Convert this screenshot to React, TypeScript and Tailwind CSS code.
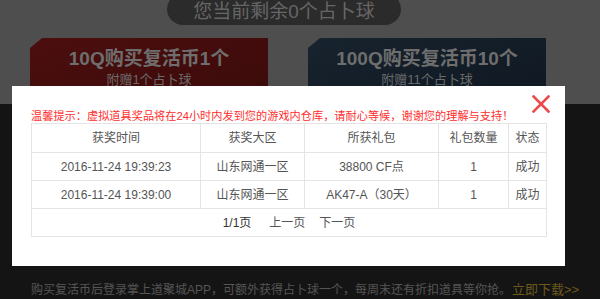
import React from "react";

const rows = [
  ["2016-11-24 19:39:23", "山东网通一区", "38800 CF点", "1", "成功"],
  ["2016-11-24 19:39:00", "山东网通一区", "AK47-A（30天）", "1", "成功"],
];

export default function App() {
  const font = { fontFamily: '"Liberation Sans", "Noto Sans CJK SC", sans-serif' };
  return (
    <div
      className="relative w-[600px] h-[299px] overflow-hidden bg-[#141414] font-['Liberation_Sans','Noto_Sans_CJK_SC',sans-serif]"
      style={font}
    >
      {/* top area */}
      <div className="h-[104px] overflow-hidden bg-[#4e4e4e]">
        <div className="ml-[167px] -mt-[7px] flex h-[32px] w-[234px] items-center justify-center rounded-full bg-[#2b2b2b] pt-[6px] text-[19px] text-[#666]">
          您当前剩余0个占卜球
        </div>
        <div className="mt-[13px] flex gap-[40px] pl-[30px]">
          <div className="h-[80px] w-[238px] bg-gradient-to-br from-[#4c0e0e] to-[#3a0a0a] pt-[8px] text-center [clip-path:polygon(12px_0,100%_0,100%_100%,0_100%,0_10px)]">
            <div className="text-[19px] font-bold leading-[26px] text-[#6e6e6e]">10Q购买复活币1个</div>
            <div className="text-[13px] leading-[16px] text-[#6a6a6a]">附赠1个占卜球</div>
          </div>
          <div className="h-[80px] w-[238px] bg-gradient-to-br from-[#17232e] to-[#0f1720] pt-[8px] text-center [clip-path:polygon(12px_0,100%_0,100%_100%,0_100%,0_10px)]">
            <div className="text-[19px] font-bold leading-[26px] text-[#6e6e6e]">100Q购买复活币10个</div>
            <div className="text-[13px] leading-[16px] text-[#6a6a6a]">附赠11个占卜球</div>
          </div>
        </div>
      </div>

      {/* bottom text */}
      <div className="pl-[31px] pt-[178px] text-[12px] leading-[16px] text-[#565656] whitespace-nowrap">
        购买复活币后登录掌上道聚城APP，可额外获得占卜球一个，每周末还有折扣道具等你抢。
        <span className="ml-[1px] text-[13px] text-[#6b5a1c]">立即下载&gt;&gt;</span>
      </div>

      {/* modal */}
      <div className="absolute left-[12px] top-[86px] h-[180px] w-[553px] bg-white pl-[19px] pt-[24px]">
        <button className="absolute left-[520px] top-[9px] h-[18px] w-[18px]" aria-label="close">
          <svg width="18" height="18" viewBox="0 0 18 18">
            <path d="M1.5 1.5 L16.5 16.5 M16.5 1.5 L1.5 16.5" stroke="#ec4a4a" strokeWidth="2.6" strokeLinecap="square" />
          </svg>
        </button>
        <div className="whitespace-nowrap text-[11.2px] leading-[13px] text-[#ff2d2d]">
          温馨提示：虚拟道具奖品将在24小时内发到您的游戏内仓库，请耐心等候，谢谢您的理解与支持！
        </div>
        <table className="w-[515px] table-fixed border-collapse text-[12px] text-[#555]">
          <colgroup>
            <col className="w-[169px]" />
            <col className="w-[104px]" />
            <col className="w-[134px]" />
            <col className="w-[70px]" />
            <col className="w-[38px]" />
          </colgroup>
          <tbody>
            <tr>
              {["获奖时间", "获奖大区", "所获礼包", "礼包数量", "状态"].map((h) => (
                <td key={h} className="h-[29px] border border-[#e4e4e4] p-0 text-center">
                  {h}
                </td>
              ))}
            </tr>
            {rows.map((r, i) => (
              <tr key={i}>
                {r.map((c, j) => (
                  <td key={j} className="h-[28px] border border-[#e4e4e4] p-0 text-center">
                    {c}
                  </td>
                ))}
              </tr>
            ))}
            <tr>
              <td colSpan={5} className="h-[28px] border border-[#e4e4e4] p-0 text-center">
                <span className="text-[#333]">1/1页</span>
                <span className="ml-[18px]">上一页</span>
                <span className="ml-[14px]">下一页</span>
              </td>
            </tr>
          </tbody>
        </table>
      </div>
    </div>
  );
}
